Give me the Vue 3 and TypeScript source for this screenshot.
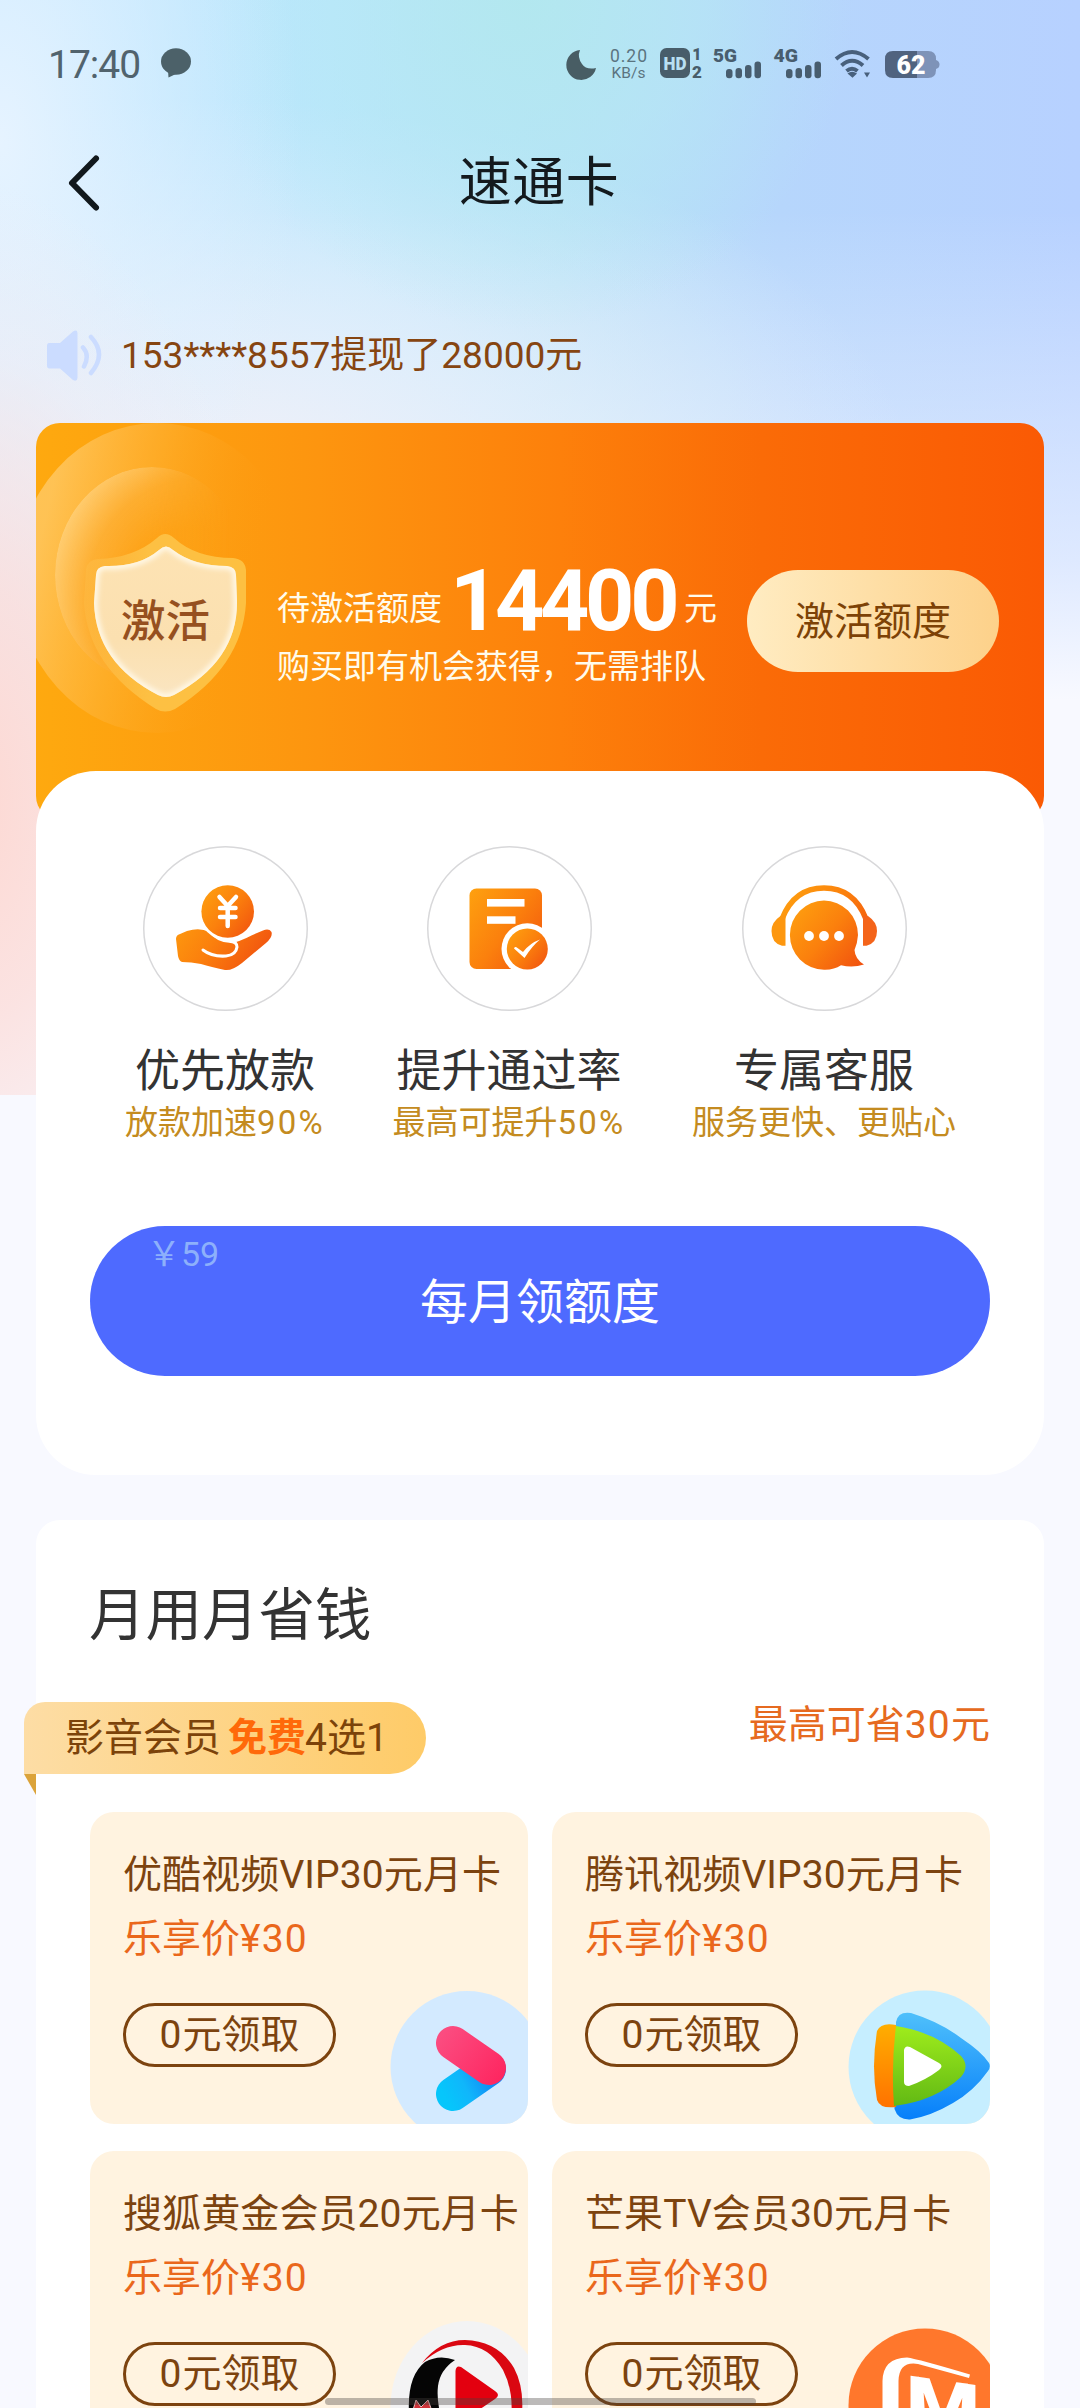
<script setup lang="ts">
interface Feature {
  icon: 'hand' | 'doc' | 'service'
  title: string
  sub: string
  rate: string
  width: number
}

interface Coupon {
  brand: 'youku' | 'tencent' | 'sohu' | 'mango'
  title: string
  price: string
}

const features: Feature[] = [
  { icon: 'hand', title: '优先放款', sub: '放款加速', rate: '90%', width: 200 },
  { icon: 'doc', title: '提升通过率', sub: '最高可提升', rate: '50%', width: 232 },
  { icon: 'service', title: '专属客服', sub: '服务更快、更贴心', rate: '', width: 262 },
]

const coupons: Coupon[] = [
  { brand: 'youku', title: '优酷视频VIP30元月卡', price: '¥30' },
  { brand: 'tencent', title: '腾讯视频VIP30元月卡', price: '¥30' },
  { brand: 'sohu', title: '搜狐黄金会员20元月卡', price: '¥30' },
  { brand: 'mango', title: '芒果TV会员30元月卡', price: '¥30' },
]
</script>

<template>
  <div class="page">
    <div class="backdrop"></div>

    <header class="status">
      <div class="status-left">
        <span class="clock">17:40</span>
        <svg width="30" height="30" viewBox="0 0 30 30">
          <ellipse cx="15" cy="13.5" rx="15" ry="13.2" fill="#4c6169" />
          <path d="M7 22 L7.5 29.5 L17 25 Z" fill="#4c6169" />
        </svg>
      </div>
      <svg class="status-icons" width="376" height="60" viewBox="564 34 376 60">
        <path d="M580 50 A15 15 0 1 0 596 68 Q586 70 582 64 Q577 57 580 50Z" fill="#485d64" />
        <text x="628.5" y="62" text-anchor="middle" font-size="17.5" fill="#5b7480" textLength="37">0.20</text>
        <text x="628.5" y="78" text-anchor="middle" font-size="15.5" fill="#5b7480" textLength="34">KB/s</text>
        <rect x="660" y="48" width="30" height="30" rx="6.5" fill="#485d6a" />
        <text x="675" y="69.5" text-anchor="middle" font-size="17.5" font-weight="900" fill="#b9e0f3" textLength="23" lengthAdjust="spacingAndGlyphs">HD</text>
        <text x="697" y="60" text-anchor="middle" font-size="16" font-weight="900" fill="#485d6a">1</text>
        <text x="697" y="77.5" text-anchor="middle" font-size="17" font-weight="900" fill="#485d6a">2</text>
        <g fill="#485d6e">
          <text x="713" y="62" font-size="19" font-weight="900" textLength="24" lengthAdjust="spacingAndGlyphs">5G</text>
          <rect x="726" y="69" width="6.5" height="9.3" rx="3" />
          <rect x="735.5" y="68" width="6.5" height="10.3" rx="3" />
          <rect x="745" y="65" width="6.5" height="13.3" rx="3" />
          <rect x="754.5" y="61.5" width="6.5" height="16.8" rx="3" />
          <text x="773.5" y="62" font-size="19" font-weight="900" textLength="24.5" lengthAdjust="spacingAndGlyphs">4G</text>
          <rect x="786" y="69" width="6.5" height="9.3" rx="3" />
          <rect x="795.5" y="68" width="6.5" height="10.3" rx="3" />
          <rect x="805" y="65" width="6.5" height="13.3" rx="3" />
          <rect x="814.5" y="61.5" width="6.5" height="16.8" rx="3" />
        </g>
        <g fill="none" stroke="#48607c" stroke-width="4">
          <path d="M836 59 Q852 45 868.5 59" />
          <path d="M841.5 65.5 Q852 56 863 65.5" />
          <path d="M846.5 71 Q852 66.5 857.5 71" />
        </g>
        <path d="M847.5 73.5 Q852 70 857 73.5 L852.5 77.7Z M864 72.5 H870 L867 77.5Z" fill="#48607c" />
        <path d="M893 51 H917 V78 H893 Q885 78 885 70 V59 Q885 51 893 51Z" fill="#50637f" />
        <path d="M917 51 H928 Q936 51 936 59 V70 Q936 78 928 78 H917Z" fill="#7e93b8" />
        <path d="M936 60 Q939.5 61 939.5 64.5 Q939.5 68 936 69Z" fill="#7e93b8" />
        <text x="911" y="73.5" text-anchor="middle" font-size="25" font-weight="900" fill="#fff" textLength="29" lengthAdjust="spacingAndGlyphs">62</text>
      </svg>
    </header>

    <nav class="navbar">
      <svg class="back" width="38" height="62" viewBox="0 0 38 62">
        <path d="M30 6.5 L6 31 L30 55.5" fill="none" stroke="#11181c" stroke-width="6" stroke-linecap="round" stroke-linejoin="round" />
      </svg>
      <h1>速通卡</h1>
    </nav>

    <div class="notice">
      <svg width="56" height="52" viewBox="0 0 56 52">
        <path d="M3 13 H14 L27 1.5 Q31 -1 31.5 3 V48 Q31 52 27 50 L14 38.5 H3 Q1 38 1 36 V16 Q1 13 3 13Z" fill="#cbdcff" />
        <path d="M37 17.5 Q44 25 38 36.5 M45 7 Q61 24 45 43" fill="none" stroke="#cbdcff" stroke-width="4.5" stroke-linecap="round" />
      </svg>
      <span>153****8557提现了28000元</span>
    </div>

    <section class="banner">
      <svg class="emblem" width="260" height="348" viewBox="0 0 260 348">
        <defs>
          <linearGradient id="ringOuter" x1="0" y1="0.3" x2="1" y2="0.55">
            <stop offset="0.1" stop-color="#ffcb6b" stop-opacity=".75" />
            <stop offset="0.45" stop-color="#ffb53c" stop-opacity=".45" />
            <stop offset="0.85" stop-color="#fd9a10" stop-opacity="0" />
          </linearGradient>
          <radialGradient id="ringInner" cx="0.72" cy="0.62" r="0.75">
            <stop offset="0.45" stop-color="#fd9f12" stop-opacity=".75" />
            <stop offset="0.75" stop-color="#fdae33" stop-opacity=".7" />
            <stop offset="1" stop-color="#ffd07a" stop-opacity=".8" />
          </radialGradient>
          <linearGradient id="ringFade" x1="0" y1="0" x2="1" y2="0">
            <stop offset="0.45" stop-color="#fff" />
            <stop offset="0.9" stop-color="#000" />
          </linearGradient>
          <mask id="innerMask">
            <ellipse cx="116" cy="152" rx="97" ry="108" fill="url(#ringFade)" />
          </mask>
          <linearGradient id="shieldFace" x1="0" y1="0" x2="0" y2="1">
            <stop offset="0" stop-color="#fde3b4" />
            <stop offset="0.6" stop-color="#fbe0b0" />
            <stop offset="1" stop-color="#fae6c4" />
          </linearGradient>
          <linearGradient id="shieldEdge" x1="0" y1="0" x2="1" y2="0">
            <stop offset="0" stop-color="#fdc04d" stop-opacity=".35" />
            <stop offset="0.4" stop-color="#fdc043" />
            <stop offset="1" stop-color="#fdc041" />
          </linearGradient>
          <filter id="soft" x="-10%" y="-10%" width="120%" height="120%">
            <feGaussianBlur stdDeviation="2.5" />
          </filter>
          <clipPath id="shieldClip">
            <path d="M123 127 Q130 120 137 127 Q158 143 191 143 Q200 144 200 152 L201 178 Q202 238 138 272 Q130 276 122 272 Q60 240 58 180 L60 152 Q60 144 69 143 Q103 144 123 127Z" />
          </clipPath>
        </defs>
        <ellipse cx="121" cy="155" rx="141" ry="155" fill="url(#ringOuter)" />
        <ellipse cx="116" cy="152" rx="97" ry="108" fill="url(#ringInner)" mask="url(#innerMask)" />
        <path d="M121 115 Q129 107 138 115 Q160 135 197 135 Q209 136 210 147 L210 180 Q206 244 139 286 Q129 291 120 286 Q52 244 48 180 L50 147 Q51 137 62 136 Q98 135 121 115Z" fill="url(#shieldEdge)" />
        <g clip-path="url(#shieldClip)">
          <rect x="50" y="115" width="160" height="170" fill="url(#shieldFace)" />
          <path d="M123 127 Q130 120 137 127 Q158 143 191 143 Q200 144 200 152 L201 178 Q202 238 138 272 Q130 276 122 272 Q60 240 58 180 L60 152 Q60 144 69 143 Q103 144 123 127Z" fill="none" stroke="#fff8e6" stroke-width="7" filter="url(#soft)" />
        </g>
        <text x="129.500" y="214" text-anchor="middle" font-size="44.500" font-weight="500" fill="#96501f">激活</text>
      </svg>
      <div class="quota">
        <div class="quota-line">
          <span class="small">待激活额度</span>
          <strong>14400</strong>
          <span class="small">元</span>
        </div>
        <p>购买即有机会获得，无需排队</p>
      </div>
      <button class="activate">激活额度</button>
    </section>

    <section class="benefits">
      <svg class="defs" width="0" height="0">
        <defs>
          <linearGradient id="warm" x1="0" y1="0.1" x2="1" y2="0.9">
            <stop offset="0" stop-color="#fea00f" />
            <stop offset="0.5" stop-color="#fb800d" />
            <stop offset="1" stop-color="#f1520f" />
          </linearGradient>
          <linearGradient id="warmPage" gradientUnits="userSpaceOnUse" x1="35" y1="55" x2="120" y2="115">
            <stop offset="0" stop-color="#fea00f" />
            <stop offset="0.5" stop-color="#fb800d" />
            <stop offset="1" stop-color="#f1520f" />
          </linearGradient>
        </defs>
      </svg>
      <ul class="features">
        <li v-for="f in features" :key="f.icon" :style="{ width: f.width + 'px' }">
          <div class="ring">
            <svg v-if="f.icon === 'hand'" width="165" height="165" viewBox="0 0 165 165">
              <path d="M44 85 Q57 81 66 86 Q74 97 88 97 Q96 96 109.5 89 L120 84.5 Q126 82 128.5 86 Q130 91 123 97 L99 117 Q89 125 82 124 Q68 121 58 118 Q48 116 39 116 Q36 115 35 110 L33 93 Q33 89 37 88Z" fill="url(#warmPage)" />
              <path d="M60 104 Q69 111 83 110 Q93 109 94 101 Q94 96 88 95.5" fill="none" stroke="#fff" stroke-width="3" stroke-linecap="round" />
              <circle cx="84.7" cy="65.5" r="29" fill="#fff" />
              <circle cx="84.7" cy="65.5" r="26.3" fill="url(#warm)" />
              <path d="M76.5 51 L84.7 60 L93 51 M84.7 60 V80 M77 62 H92.5 M77 71 H92.5" fill="none" stroke="#fff" stroke-width="4.5" stroke-linecap="round" stroke-linejoin="round" />
            </svg>
            <svg v-else-if="f.icon === 'doc'" width="165" height="165" viewBox="0 0 165 165">
              <rect x="42.5" y="42.5" width="72.5" height="80.5" rx="7" fill="url(#warmPage)" />
              <rect x="60" y="53" width="37.5" height="7.6" fill="#fff" />
              <rect x="60" y="70.3" width="28.5" height="7.5" fill="#fff" />
              <circle cx="100.3" cy="103" r="25.8" fill="#fff" />
              <circle cx="100.3" cy="103" r="20.5" fill="url(#warm)" />
              <path d="M87 102.5 Q88 100 90.5 102 L96 106 Q103 97 113 93.5 Q105 100 97.5 112 Z" fill="#fff" />
            </svg>
            <svg v-else width="165" height="165" viewBox="0 0 165 165">
              <path d="M40 73 Q52 42 82 42 Q112 42 124 73" fill="none" stroke="url(#warmPage)" stroke-width="5.5" />
              <path d="M38.5 70 L43.5 70 V99.8 H40 Q29.5 97 29.5 85 Q29.5 76 38.5 70Z" fill="#fd970f" />
              <path d="M126 70 L121 70 V99.8 H124.5 Q135 97 135 85 Q135 76 126 70Z" fill="#f4641a" />
              <path d="M82 54.5 A34 34.5 0 0 1 116 89 Q115.5 97 112.5 104 Q113 113 122 118.5 Q111 122 99 119.3 Q92 124 82 123.7 A34 34.5 0 0 1 82 54.5Z" fill="url(#warm)" />
              <circle cx="67" cy="90" r="4.9" fill="#fff" />
              <circle cx="82" cy="90" r="4.9" fill="#fff" />
              <circle cx="97" cy="90" r="4.9" fill="#fff" />
            </svg>
          </div>
          <h3>{{ f.title }}</h3>
          <p>{{ f.sub }}<span v-if="f.rate" class="rate">{{ f.rate }}</span></p>
        </li>
      </ul>
      <button class="claim">
        <span class="cost">￥59</span>
        每月领额度
      </button>
    </section>

    <section class="savings">
      <h2>月用月省钱</h2>
      <div class="group-head">
        <div class="ribbon">影音会员<b>免费</b>4选1</div>
        <span class="save">最高可省<span class="num">30</span>元</span>
      </div>
      <div class="coupons">
        <article v-for="c in coupons" :key="c.brand" class="coupon">
          <h4>{{ c.title }}</h4>
          <p>乐享价<span class="num">{{ c.price }}</span></p>
          <button><span class="num">0</span>元领取</button>
          <svg class="logo" width="150" height="144" viewBox="288 168 150 144">
            <template v-if="c.brand === 'youku'">
              <defs>
                <linearGradient id="yk" gradientUnits="userSpaceOnUse" x1="355" y1="285" x2="400" y2="262">
                  <stop offset="0" stop-color="#06c6fb" />
                  <stop offset="0.45" stop-color="#10b6fb" />
                  <stop offset="1" stop-color="#1187f5" />
                </linearGradient>
                <linearGradient id="ykPink" gradientUnits="userSpaceOnUse" x1="350" y1="225" x2="410" y2="270">
                  <stop offset="0" stop-color="#fb4c80" />
                  <stop offset="1" stop-color="#fe2660" />
                </linearGradient>
              </defs>
              <ellipse cx="377" cy="255" rx="76.5" ry="76" fill="#d3eaff" />
              <path d="M363 282 L399 257" stroke="url(#yk)" stroke-width="34" stroke-linecap="round" />
              <path d="M363 231 L399 256" stroke="url(#ykPink)" stroke-width="34" stroke-linecap="round" />
            </template>
            <template v-else-if="c.brand === 'tencent'">
              <defs>
                <linearGradient id="txBlue" x1="0" y1="0" x2="0" y2="1">
                  <stop offset="0" stop-color="#4fc0fb" />
                  <stop offset="1" stop-color="#067ffa" />
                </linearGradient>
                <linearGradient id="txGreen" x1="0" y1="0" x2="0" y2="1">
                  <stop offset="0" stop-color="#9fec1c" />
                  <stop offset="1" stop-color="#62b914" />
                </linearGradient>
                <linearGradient id="txOrange" x1="0" y1="0" x2="0" y2="1">
                  <stop offset="0" stop-color="#ffae00" />
                  <stop offset="1" stop-color="#ff7200" />
                </linearGradient>
              </defs>
              <circle cx="373" cy="255" r="76.5" fill="#c6eeff" />
              <path d="M344 210 Q346 199 359 201 Q388 210 409 226 Q430 240 437 251 Q439 255 436 259 Q422 279 401 291 Q379 304 358 307.5 Q346 308 342.5 297Z" fill="url(#txBlue)" />
              <path d="M344 213 Q329 210 325 219 Q319 255 325 288 Q328 297 344 295Z" fill="url(#txOrange)" />
              <path d="M344 214 Q383 220 409 244 Q418 254 409 265 Q383 289 342 294 Q339 254 344 214Z" fill="url(#txGreen)" />
              <path d="M352 238 Q353 233 358 235 L387 251 Q392 254 387 258 Q374 268 357 274 Q352 274 352 270Z" fill="#fff" />
            </template>
            <template v-else-if="c.brand === 'sohu'">
              <ellipse cx="377" cy="256" rx="76.5" ry="86" fill="#f3f3f4" />
              <path d="M332 212 Q350 189 375 189 Q408 190 424 217 Q439 245 427 290 L417 290 Q428 248 413 219 Q399 195 375 194 Q353 193 332 212Z" fill="#da0711" />
              <path d="M319 262 Q317 225 335 211 Q349 203 365 209 Q350 219 348 235 Q346 253 354 275 L326 290Z" fill="#050505" />
              <path d="M365.5 220 Q366 214 371 216 L405 240 Q411 244 405 248 L371 271 Q366 274 365.5 267Z" fill="#e3000f" />
              <path d="M323 259 L326 249 L331 256 L338 249 L342 260Z" fill="#cf343a" stroke="#efc5c5" stroke-width="1" />
            </template>
            <template v-else>
              <circle cx="373" cy="254" r="76.5" fill="#ff772c" />
              <path d="M330.5 318 V230 Q331 207 355 206.5 Q366 208 418 223.5 L417 227 L366 213 Q347 210 346.5 230 V318Z" fill="#fff" />
              <text transform="translate(354 276) skewY(8)" font-size="73" font-weight="900" fill="#fff" textLength="74" lengthAdjust="spacingAndGlyphs">M</text>
            </template>
          </svg>
        </article>
      </div>
    </section>

    <div class="home-bar"></div>
  </div>
</template>

<style>
body {
  background: #f8f9ff;
}
</style>

<style scoped>
.page {
  position: relative;
  box-sizing: border-box;
  width: 1080px;
  height: 2408px;
  overflow: hidden;
  padding: 0 36px;
  background: #f8f9ff;
  font-family: Roboto, "Noto Sans CJK SC", sans-serif;
  color: #333;
}
h1, h2, h3, h4, p, ul {
  margin: 0;
  padding: 0;
  font-weight: 400;
}
li {
  list-style: none;
}
button {
  border: 0;
  padding: 0;
  font-family: inherit;
}
svg {
  display: block;
  flex: none;
}
.defs {
  position: absolute;
}
.num {
  letter-spacing: 1.2px;
}
.backdrop {
  position: absolute;
  left: 0;
  top: 0;
  width: 1080px;
  height: 1095px;
  background:
    radial-gradient(ellipse 320px 620px at -30px 800px, rgba(253, 216, 210, 1) 0%, rgba(252, 221, 218, .8) 35%, rgba(249, 232, 236, .3) 72%, rgba(250, 238, 243, 0) 100%),
    radial-gradient(ellipse 300px 560px at 0 140px, rgba(232, 244, 255, .95) 0%, rgba(226, 242, 255, .6) 45%, rgba(200, 232, 255, 0) 100%),
    radial-gradient(ellipse 330px 330px at 525px 0, rgba(178, 232, 238, .9) 0%, rgba(181, 232, 243, .6) 50%, rgba(182, 228, 250, 0) 100%),
    radial-gradient(ellipse 720px 400px at 200px 500px, rgba(242, 240, 247, 1) 0%, rgba(231, 239, 251, .75) 45%, rgba(214, 232, 255, 0) 100%),
    linear-gradient(180deg, rgba(248, 249, 255, 0) 0, rgba(248, 249, 255, 0) 210px, rgba(248, 249, 255, .38) 440px, rgba(248, 249, 255, .6) 560px, #f8f9ff 700px),
    linear-gradient(90deg, #bce4ff 0, #bbe7fd 330px, #b6e1f7 560px, #b6d6fc 780px, #b7d1ff 1080px);
}
.status {
  position: relative;
  display: flex;
  align-items: center;
  justify-content: space-between;
  height: 128px;
  margin: 0 104px 0 12px;
}
.status-left {
  display: flex;
  align-items: center;
  gap: 21px;
  height: 40px;
}
.status-left svg {
  margin-top: -3px;
}
.clock {
  padding-top: 2px;
  font-size: 39px;
  line-height: 40px;
  letter-spacing: -1px;
  color: #51636d;
}
.navbar {
  position: relative;
  display: flex;
  align-items: center;
  height: 110px;
}
.back {
  margin-left: 30px;
}
.navbar h1 {
  flex: 1;
  padding-right: 70px;
  text-align: center;
  font-size: 53px;
  line-height: 80px;
  letter-spacing: .5px;
  color: #141a1e;
}
.notice {
  position: relative;
  display: flex;
  align-items: center;
  gap: 19px;
  height: 135px;
  box-sizing: border-box;
  margin-top: 50px;
  padding-left: 10px;
  font-size: 37px;
  line-height: 50px;
  color: #864511;
}
.banner {
  position: relative;
  display: flex;
  box-sizing: border-box;
  height: 397px;
  margin-bottom: -49px;
  padding-left: 241px;
  border-radius: 24px;
  overflow: hidden;
  background: linear-gradient(90deg, #fea90f 0, #fd950f 28%, #fd800b 52%, #fa6b07 72%, #fa5a04 100%);
}
.emblem {
  position: absolute;
  left: 0;
  top: 0;
}
.quota {
  width: 440px;
  padding-top: 137px;
  color: #fffbec;
}
.quota-line {
  display: flex;
  align-items: center;
  height: 80px;
  white-space: nowrap;
}
.small {
  padding-top: 17px;
  font-size: 33px;
  line-height: 40px;
}
.quota strong {
  width: 230px;
  margin: 2px 6px 0 8px;
  font-size: 86px;
  line-height: 80px;
  font-weight: 700;
  letter-spacing: -4.3px;
  color: #fff;
}
.quota p {
  font-size: 33px;
  line-height: 54px;
  white-space: nowrap;
}
.activate {
  width: 252px;
  height: 102px;
  margin: 147px 0 0 30px;
  border-radius: 51px;
  background: linear-gradient(90deg, #ffecc2, #fdd18a);
  font-size: 39px;
  line-height: 104px;
  color: #7d4206;
}
.benefits {
  position: relative;
  box-sizing: border-box;
  height: 704px;
  padding: 75px 54px 0;
  border-radius: 60px;
  background: #fff;
}
.features {
  display: flex;
  justify-content: center;
  gap: 68px;
}
.features li {
  display: flex;
  flex-direction: column;
  align-items: center;
  white-space: nowrap;
}
.ring {
  box-sizing: border-box;
  width: 165px;
  height: 165px;
  border-radius: 50%;
  box-shadow: inset 0 0 0 1.5px #d8d8da;
}
.features h3 {
  margin-top: 31px;
  font-size: 45px;
  line-height: 60px;
  color: #333;
}
.features p {
  margin-top: -1px;
  font-size: 33px;
  line-height: 44px;
  color: #c48b20;
}
.rate {
  letter-spacing: 2.2px;
}
.claim {
  position: relative;
  display: block;
  width: 900px;
  height: 150px;
  margin-top: 81px;
  border-radius: 75px;
  background: #4e6aff;
  font-size: 48px;
  line-height: 154px;
  color: #fff;
}
.cost {
  position: absolute;
  left: 57px;
  top: 8px;
  font-size: 34px;
  line-height: 40px;
  color: #8db0fb;
}
.savings {
  position: relative;
  box-sizing: border-box;
  height: 1100px;
  margin-top: 45px;
  padding: 61px 54px 0;
  border-radius: 24px;
  background: #fff;
}
.savings h2 {
  margin-left: -1px;
  font-size: 56.5px;
  line-height: 70px;
  color: #333;
}
.group-head {
  display: flex;
  justify-content: space-between;
  margin: 51px 0 38px -66px;
}
.ribbon {
  position: relative;
  box-sizing: border-box;
  width: 402px;
  height: 72px;
  padding-left: 41px;
  border-radius: 21px 36px 36px 0;
  background: linear-gradient(90deg, #fddda5, #fecb68);
  font-size: 39px;
  line-height: 73px;
  white-space: nowrap;
  color: #7c430a;
}
.ribbon::after {
  content: "";
  position: absolute;
  left: 0;
  top: 72px;
  border-style: solid;
  border-width: 0 12px 21px 0;
  border-color: transparent #dba33a transparent transparent;
}
.ribbon b {
  margin: 0 -1px 0 7px;
  color: #ff690a;
}
.save {
  font-size: 39px;
  line-height: 46px;
  color: #e66a20;
}
.coupons {
  display: grid;
  grid-template-columns: 438px 438px;
  grid-auto-rows: 312px;
  gap: 27px 24px;
}
.coupon {
  position: relative;
  box-sizing: border-box;
  padding: 31px 0 0 33px;
  border-radius: 24px;
  overflow: hidden;
  background: #fff3e0;
  white-space: nowrap;
}
.coupon h4 {
  font-size: 39px;
  line-height: 64px;
  letter-spacing: .1px;
  color: #7c430f;
}
.coupon p {
  font-size: 39px;
  line-height: 64px;
  color: #ea671b;
}
.coupon button {
  box-sizing: border-box;
  width: 213px;
  height: 64px;
  margin-top: 32px;
  border: 3px solid #7c430f;
  border-radius: 32px;
  background: transparent;
  font-size: 39px;
  line-height: 59px;
  color: #7c430f;
}
.logo {
  position: absolute;
  right: 0;
  bottom: 0;
}
.home-bar {
  position: absolute;
  left: 325px;
  top: 2398px;
  width: 431px;
  height: 7px;
  border-radius: 4px;
  background: rgba(70, 65, 60, .36);
}
</style>
